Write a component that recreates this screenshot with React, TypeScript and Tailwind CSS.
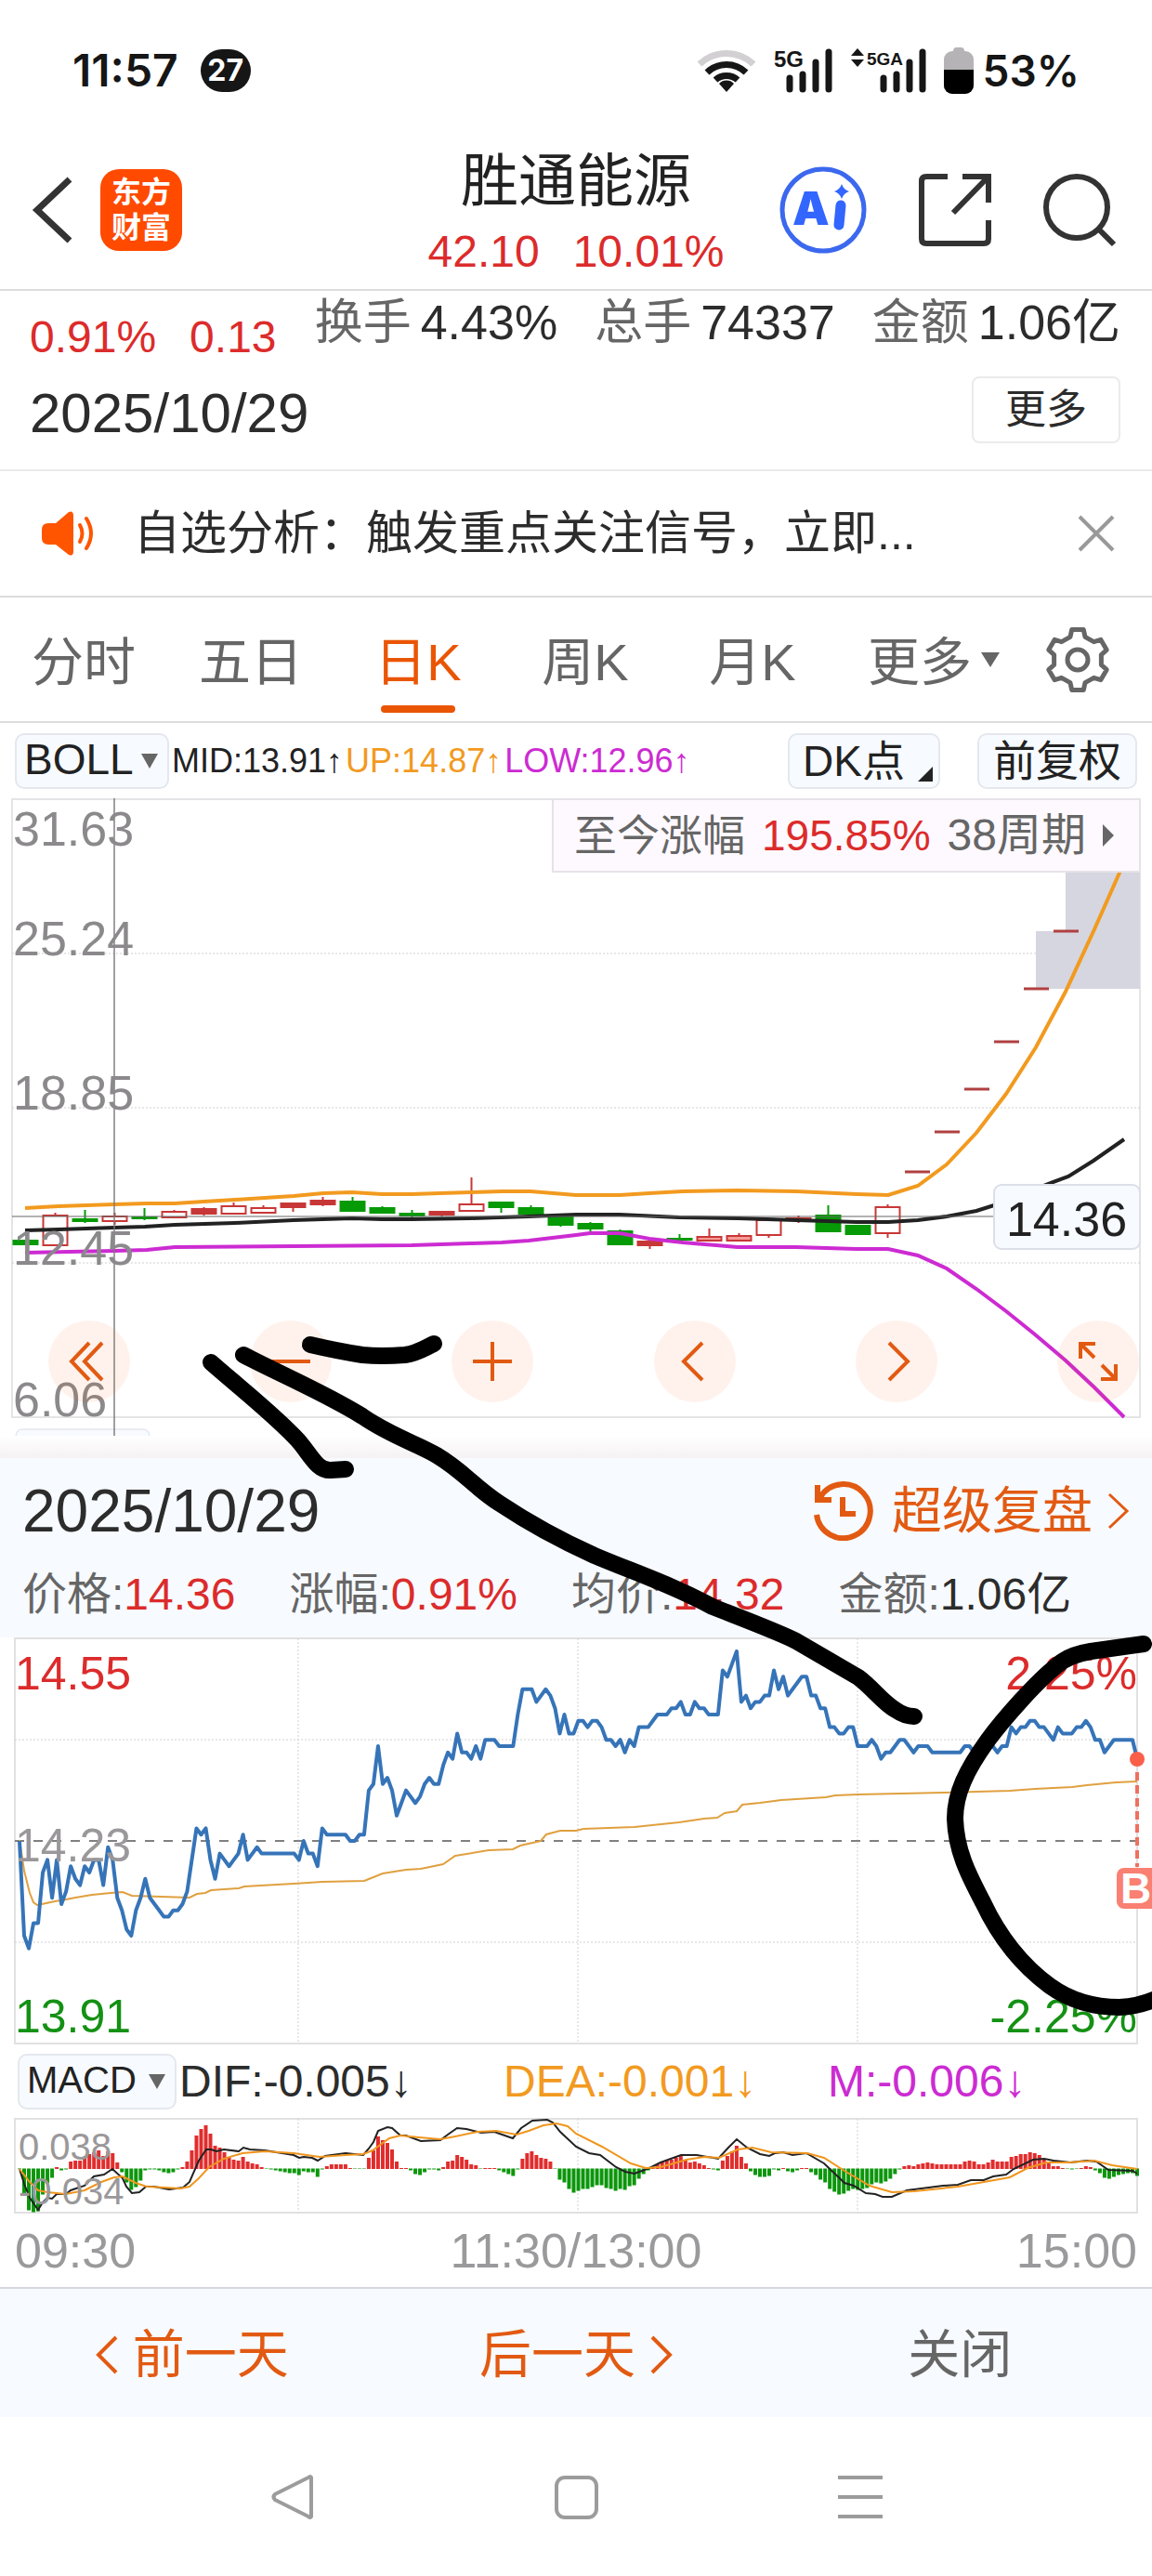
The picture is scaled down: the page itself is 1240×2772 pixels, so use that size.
import type { ReactNode } from "react";
import clsx from "clsx";

type Point = [number, number];

const TABS = ["分时", "五日", "日K", "周K", "月K"];

const STATS = [
  { label: "价格", value: "14.36", up: true },
  { label: "涨幅", value: "0.91%", up: true },
  { label: "均价", value: "14.32", up: true },
  { label: "金额", value: "1.06亿", up: false },
];

// kind, high, body top, body bottom, low
type Candle = ["up" | "solid" | "down", number, number, number, number];

const CANDLES: Candle[] = [
  ["down", 1335, 1335, 1339, 1339],
  ["up", 1305, 1308, 1340, 1340],
  ["down", 1302, 1312, 1314, 1316],
  ["up", 1305, 1309, 1314, 1318],
  ["down", 1300, 1310, 1311, 1313],
  ["up", 1302, 1304, 1310, 1310],
  ["solid", 1299, 1301, 1306, 1308],
  ["up", 1294, 1298, 1306, 1306],
  ["up", 1297, 1300, 1305, 1305],
  ["solid", 1294, 1295, 1299, 1304],
  ["solid", 1288, 1292, 1296, 1298],
  ["down", 1288, 1293, 1303, 1304],
  ["down", 1298, 1300, 1305, 1306],
  ["down", 1302, 1306, 1308, 1311],
  ["solid", 1303, 1304, 1307, 1309],
  ["up", 1267, 1296, 1303, 1303],
  ["down", 1294, 1294, 1299, 1305],
  ["down", 1297, 1300, 1306, 1307],
  ["down", 1309, 1309, 1318, 1320],
  ["down", 1315, 1317, 1322, 1325],
  ["down", 1323, 1325, 1339, 1339],
  ["solid", 1336, 1336, 1340, 1344],
  ["down", 1328, 1333, 1334, 1334],
  ["up", 1322, 1331, 1335, 1335],
  ["up", 1327, 1330, 1335, 1335],
  ["up", 1313, 1313, 1329, 1332],
  ["solid", 1308, 1311, 1313, 1316],
  ["down", 1297, 1308, 1325, 1325],
  ["down", 1319, 1319, 1328, 1329],
  ["up", 1296, 1299, 1327, 1332],
];

// limit-up days: open = high = low = close
const LIMIT_DAYS: Point[] = [
  [974, 1261], [1006, 1218], [1038, 1172], [1070, 1121], [1102, 1064], [1134, 1002],
];

const BOLL_UP: Point[] = [
  [27, 1300], [63, 1298], [123, 1296], [158, 1295], [188, 1295], [219, 1293], [253, 1291], [285, 1289],
  [316, 1287], [348, 1284], [379, 1283], [411, 1285], [443, 1285], [474, 1284], [507, 1283], [540, 1282],
  [571, 1282], [620, 1286], [635, 1286], [667, 1286], [699, 1284], [735, 1282], [794, 1281], [857, 1282],
  [922, 1285], [956, 1286], [988, 1276], [1019, 1253], [1051, 1219], [1083, 1177], [1115, 1127],
  [1147, 1067], [1178, 1000], [1206, 937],
];

const BOLL_MID: Point[] = [
  [27, 1324], [63, 1323], [123, 1321], [156, 1320], [188, 1318], [253, 1316], [316, 1313], [379, 1311],
  [411, 1312], [443, 1312], [506, 1311], [569, 1309], [620, 1307], [667, 1307], [731, 1310], [794, 1311],
  [857, 1313], [922, 1315], [956, 1315], [988, 1313], [1019, 1309], [1051, 1303], [1070, 1297],
  [1128, 1274], [1150, 1266], [1177, 1249], [1210, 1226],
];

const BOLL_LOW: Point[] = [
  [27, 1348], [123, 1346], [158, 1345], [188, 1342], [316, 1341], [443, 1340], [506, 1338], [540, 1337],
  [569, 1335], [620, 1329], [635, 1327], [667, 1327], [699, 1333], [735, 1337], [794, 1342], [857, 1342],
  [922, 1344], [956, 1344], [988, 1351], [1019, 1365], [1051, 1387], [1083, 1411], [1114, 1436],
  [1147, 1464], [1178, 1493], [1210, 1525],
];

// one value a minute, in cents above the previous close of 14.23
const PRICES = [
  0, -15, -17, -13, -13, -5, -3, -9, -3, -10, -8, -4, -6, -7, -4, -5, -3, -3, -7, -1,
  -3, -9, -11, -14, -15, -11, -9, -6, -9, -10, -11, -12, -12, -11, -11, -10, -8, -3, 2, 1,
  2, -3, -6, -2, -3, -4, -3, -2, 1, -3, -2, -1, -2, -2, -2, -2, -2, -2, -2, -2,
  -3, 0, -2, -2, -4, 2, 1, 1, 1, 1, 1, 0, 0, 1, 1, 8, 9, 15, 9, 10,
  8, 4, 6, 8, 7, 6, 7, 9, 10, 9, 9, 12, 14, 13, 17, 14, 14, 13, 15, 13,
  16, 16, 16, 15, 15, 15, 15, 20, 24, 24, 24, 22, 23, 24, 23, 21, 17, 20, 17, 17,
  19, 19, 18, 19, 19, 18, 16, 16, 15, 16, 14, 16, 15, 18, 18, 18, 19, 20, 20, 20,
  21, 21, 22, 20, 20, 22, 21, 21, 20, 20, 20, 27, 26, 28, 30, 22, 23, 21, 22, 22,
  23, 23, 27, 24, 26, 23, 24, 25, 26, 26, 23, 23, 21, 21, 18, 18, 17, 17, 18, 18,
  15, 15, 15, 16, 15, 13, 14, 14, 15, 16, 16, 15, 14, 15, 15, 15, 14, 14, 14, 14,
  14, 14, 14, 15, 15, 14, 14, 15, 15, 15, 14, 15, 15, 18, 17, 18, 18, 19, 19, 18,
  18, 17, 16, 18, 17, 17, 17, 18, 18, 19, 18, 16, 16, 14, 15, 16, 16, 16, 16, 16,
  13,
];

const AVERAGE: Point[] = [
  [21, 1980], [26, 2013], [32, 2037], [36, 2047], [40, 2050], [45, 2049], [59, 2046], [71, 2044],
  [81, 2042], [99, 2039], [119, 2037], [132, 2036], [142, 2040], [174, 2041], [204, 2042], [212, 2038],
  [221, 2037], [227, 2034], [257, 2032], [263, 2030], [316, 2027], [347, 2025], [392, 2024], [397, 2022],
  [412, 2016], [437, 2012], [453, 2011], [477, 2006], [490, 1997], [526, 1991], [552, 1990], [560, 1986],
  [582, 1981], [588, 1974], [603, 1970], [620, 1970], [628, 1968], [683, 1966], [731, 1961], [758, 1957],
  [772, 1956], [780, 1951], [793, 1949], [799, 1942], [818, 1940], [841, 1937], [889, 1934], [899, 1932],
  [924, 1931], [1015, 1929], [1087, 1927], [1114, 1925], [1154, 1923], [1170, 1921], [1201, 1918],
  [1224, 1917],
];

const MACD_BARS = [
  0, -28, -45, -47, -46, -28, -16, -10, 2, -2, -1, 8, 9, 9, 13, 16, 18, 20, 14, 19,
  17, 7, -4, -15, -23, -20, -13, -2, -1, -1, -2, -4, -5, -4, -1, 2, 8, 20, 36, 43,
  47, 38, 25, 23, 18, 12, 10, 9, 13, 8, 6, 5, 2, 0, -1, -2, -3, -4, -5, -5,
  -7, -3, -4, -4, -9, -1, 3, 5, 5, 5, 5, 1, 0, 0, 0, 12, 20, 35, 31, 28,
  21, 8, 1, 1, -2, -6, -7, -4, -1, -1, -2, 2, 8, 9, 15, 13, 10, 5, 4, 0,
  1, 1, 1, -2, -4, -6, -8, -1, 11, 17, 19, 15, 12, 11, 8, 0, -12, -15, -22, -26,
  -24, -22, -22, -20, -18, -18, -21, -22, -24, -22, -23, -19, -18, -11, -6, -2, 2, 5, 8, 9,
  10, 12, 14, 10, 7, 8, 6, 4, 1, -1, -2, 9, 14, 19, 25, 13, 6, -3, -7, -9,
  -9, -8, -1, -2, 1, -3, -4, -2, 1, 1, -4, -7, -12, -15, -22, -25, -28, -27, -24, -22,
  -23, -22, -21, -17, -15, -16, -14, -11, -6, -1, 3, 4, 3, 5, 6, 7, 6, 5, 5, 5,
  5, 5, 5, 8, 9, 8, 5, 5, 7, 10, 8, 8, 8, 13, 14, 16, 16, 18, 17, 15,
  11, 8, 3, 3, 1, 0, -1, 0, 1, 3, 2, -2, -5, -10, -11, -9, -7, -6, -5, -5,
  -8,
];

const DIF: Point[] = [
  [21, 2334], [26, 2350], [32, 2365], [41, 2378], [46, 2370], [51, 2365], [56, 2366], [61, 2361],
  [71, 2361], [76, 2357], [91, 2352], [101, 2342], [112, 2340], [121, 2334], [132, 2344], [136, 2353],
  [142, 2360], [150, 2359], [157, 2353], [166, 2353], [182, 2356], [197, 2354], [204, 2348], [214, 2325],
  [222, 2313], [227, 2313], [233, 2315], [241, 2313], [257, 2315], [262, 2311], [269, 2313], [285, 2314],
  [316, 2319], [322, 2322], [327, 2321], [336, 2322], [342, 2325], [350, 2320], [372, 2317], [391, 2319],
  [397, 2312], [402, 2305], [407, 2293], [417, 2289], [422, 2290], [431, 2298], [437, 2298], [453, 2304],
  [474, 2303], [482, 2297], [492, 2290], [502, 2291], [518, 2295], [532, 2294], [552, 2301], [561, 2290],
  [573, 2282], [589, 2281], [595, 2284], [603, 2294], [620, 2310], [634, 2317], [646, 2319], [663, 2332],
  [673, 2337], [683, 2339], [699, 2333], [711, 2327], [733, 2319], [750, 2319], [773, 2323], [784, 2311],
  [793, 2302], [804, 2311], [818, 2318], [828, 2320], [834, 2317], [843, 2316], [853, 2319], [868, 2317],
  [887, 2328], [909, 2349], [919, 2352], [932, 2360], [942, 2361], [950, 2364], [960, 2364], [976, 2357],
  [1015, 2352], [1031, 2351], [1045, 2346], [1059, 2346], [1069, 2342], [1083, 2340], [1091, 2334],
  [1112, 2324], [1124, 2323], [1134, 2325], [1152, 2327], [1170, 2325], [1180, 2326], [1193, 2335],
  [1219, 2336], [1224, 2339],
];

const DEA: Point[] = [
  [21, 2334], [32, 2348], [41, 2357], [51, 2359], [71, 2361], [91, 2357], [109, 2348], [123, 2343],
  [132, 2342], [146, 2349], [158, 2353], [178, 2354], [194, 2355], [204, 2353], [214, 2344], [225, 2332],
  [241, 2323], [261, 2317], [285, 2315], [316, 2317], [344, 2321], [372, 2319], [391, 2318], [401, 2314],
  [419, 2301], [431, 2298], [451, 2300], [474, 2302], [490, 2299], [514, 2294], [534, 2293], [556, 2297],
  [569, 2293], [585, 2287], [599, 2285], [611, 2288], [620, 2296], [648, 2310], [679, 2328], [695, 2333],
  [711, 2332], [739, 2324], [758, 2321], [774, 2322], [794, 2313], [810, 2311], [830, 2316], [869, 2317],
  [887, 2322], [909, 2336], [936, 2352], [960, 2359], [984, 2358], [1031, 2353], [1087, 2343],
  [1106, 2333], [1126, 2327], [1150, 2327], [1178, 2325], [1197, 2330], [1224, 2334],
];

const line = (points: Point[]) => points.map((p) => p.join(",")).join(" ");
const minuteX = (i: number) => 21 + i * 5.0125;

// six-tooth gear outline around 0,0
const GEAR = Array.from({ length: 6 }, (_, k) =>
  [[-18, 26], [-11, 33], [11, 33], [18, 26]].map(([offset, r]) => {
    const a = ((k * 60 - 90 + offset) * Math.PI) / 180;
    return `${(r * Math.cos(a)).toFixed(1)},${(r * Math.sin(a)).toFixed(1)}`;
  }).join(" ")
).join(" ");

function SignalBars() {
  return (
    <>
      <path d="M15 44V32" />
      <path d="M29 44V28" />
      <path d="M43 44V15" />
      <path d="M57 44V4" />
    </>
  );
}

function StatusBar() {
  return (
    <div className="flex h-[148px] items-center justify-between pl-[78px] pr-[78px] pt-1 font-['Inter',sans-serif] text-[#161616]">
      <div className="flex items-center gap-6">
        <span className="text-[48px] font-semibold leading-none">11:57</span>
        <span className="flex h-[46px] w-[54px] items-center justify-center rounded-full bg-[#161616] text-[32px] font-bold leading-none text-white">27</span>
      </div>
      <div className="flex items-center">
        <svg className="h-12 w-16" viewBox="0 0 64 48" fill="none" strokeWidth="7" aria-label="Wi-Fi">
          <path d="M3 17a42 42 0 0 1 58 0" stroke="#d2d0d2" />
          <path d="M11 26a30 30 0 0 1 42 0" stroke="#161616" />
          <path d="M20 34a18 18 0 0 1 24 0" stroke="#161616" />
          <path d="M32 47l-8-9a11 11 0 0 1 16 0z" fill="#161616" />
        </svg>
        <svg className="ml-[18px] h-12 w-[66px] overflow-visible font-['Liberation_Sans',sans-serif]" viewBox="0 0 66 48" stroke="#161616" strokeWidth="7" strokeLinecap="round" aria-label="5G">
          <g transform="translate(3 0)"><SignalBars /></g>
          <text x="1" y="20" fontSize="24" fontWeight="700" stroke="none" fill="#161616">5G</text>
        </svg>
        <svg className="ml-[18px] h-12 w-[84px] overflow-visible font-['Liberation_Sans',sans-serif]" viewBox="0 0 84 48" stroke="#161616" strokeWidth="7" strokeLinecap="round" aria-label="5GA">
          <g transform="translate(20 0)"><SignalBars /></g>
          <path d="M0 8l7-8 7 8zM0 12l7 8 7-8z" stroke="none" fill="#161616" />
          <text x="17" y="18" fontSize="19" fontWeight="700" stroke="none" fill="#161616">5GA</text>
        </svg>
        <svg className="ml-4 h-[50px] w-8" viewBox="0 0 32 50" aria-label="Battery">
          <rect x="10" y="0" width="12" height="10" rx="4" fill="#b5b3b5" />
          <rect x="0" y="4" width="32" height="46" rx="9" fill="#b5b3b5" />
          <path d="M0 24h32v17a9 9 0 0 1-9 9H9a9 9 0 0 1-9-9z" fill="#000" />
        </svg>
        <span className="ml-[10px] text-[46px] font-semibold leading-none">53%</span>
      </div>
    </div>
  );
}

function Header() {
  return (
    <header className="relative flex h-[165px] items-center justify-between border-b-2 border-[#dcdcde] pb-2 pl-8 pr-[38px]">
      <div className="flex items-center gap-7">
        <button type="button" aria-label="返回">
          <svg className="h-[76px] w-12" viewBox="0 0 48 76" fill="none" stroke="#333" strokeWidth="7">
            <path d="M43 5L8 38l35 33" />
          </svg>
        </button>
        <a href="#home" className="flex size-[88px] flex-col items-center justify-center rounded-[20px] bg-[#ff4a00] text-[32px] font-bold leading-[38px] text-white">
          <span>东方</span>
          <span>财富</span>
        </a>
      </div>
      <div className="absolute inset-x-0 top-2 mx-auto flex w-fit flex-col items-center">
        <h1 className="text-[62px] leading-[80px] text-[#222]">胜通能源</h1>
        <p className="flex gap-9 text-[48px] leading-[70px] text-[#dc2b2b]">
          <span>42.10</span>
          <span>10.01%</span>
        </p>
      </div>
      <div className="flex items-center gap-[54px]">
        <button type="button" aria-label="Ai">
          <svg className="size-24" viewBox="0 0 96 96">
            <circle cx="48" cy="48" r="44" fill="none" stroke="#3b68ee" strokeWidth="5" />
            <text x="15" y="64" fontSize="50" fontWeight="900" fill="#3366ff" className="font-['Inter',sans-serif]">A</text>
            <path d="M67 43l-2 21" stroke="#3366ff" strokeWidth="11" strokeLinecap="round" />
            <path d="M68 20q2 6 8 8-6 2-8 8-2-6-8-8 6-2 8-8z" fill="#3366ff" />
          </svg>
        </button>
        <button type="button" aria-label="分享">
          <svg className="size-20" viewBox="0 0 80 80" fill="none" stroke="#333" strokeWidth="6">
            <path d="M32 4H9q-5 0-5 5v62q0 5 5 5h62q5 0 5-5V51" />
            <path d="M48 4h28v28" />
            <path d="M75 5L38 43" />
          </svg>
        </button>
        <button type="button" aria-label="搜索">
          <svg className="size-20" viewBox="0 0 80 80" fill="none" stroke="#333" strokeWidth="6">
            <circle cx="37" cy="37" r="33" />
            <path d="M60 60l17 17" />
          </svg>
        </button>
      </div>
    </header>
  );
}

function Quote() {
  return (
    <section className="flex h-[194px] justify-between border-b-2 border-[#ebebeb] pl-8 pr-[34px] text-[#2c2c2c]">
      <div className="pt-[9px] leading-[82px]">
        <p className="flex gap-9 text-[48px] text-[#dc2b2b]">
          <span>0.91%</span>
          <span>0.13</span>
        </p>
        <p className="text-[60px]">2025/10/29</p>
      </div>
      <div className="flex flex-col items-end gap-6">
        <dl className="flex gap-10 text-[52px] leading-[68px]">
          {[["换手", "4.43%"], ["总手", "74337"], ["金额", "1.06亿"]].map(([k, v]) => (
            <div key={k} className="flex gap-[10px]">
              <dt className="text-[#666]">{k}</dt>
              <dd>{v}</dd>
            </div>
          ))}
        </dl>
        <button type="button" className="h-[72px] w-40 rounded-lg border-2 border-[#ebebeb] text-[44px] leading-none">更多</button>
      </div>
    </section>
  );
}

function Notice() {
  return (
    <section className="flex h-[136px] items-center border-b-2 border-[#dcdcde] pl-11 pr-[38px]">
      <svg className="h-12 w-[58px]" viewBox="0 0 58 48" fill="none" stroke="#ff5500" strokeWidth="4" strokeLinecap="round">
        <path d="M8 13h8L30 1q5-2 5 4v38q0 6-5 4L16 36H8q-7 0-7-7v-9q0-7 7-7z" fill="#ff5500" stroke="none" />
        <path d="M42 15q5 9 0 18" />
        <path d="M49 8q10 16 0 32" />
      </svg>
      <p className="ml-[42px] flex-1 truncate text-[50px] text-[#2c2c2c]">自选分析：触发重点关注信号，立即...</p>
      <button type="button" aria-label="关闭提示">
        <svg className="size-11" viewBox="0 0 44 44" stroke="#999" strokeWidth="4">
          <path d="M4 4l36 36M40 4L4 40" />
        </svg>
      </button>
    </section>
  );
}

function Tabs() {
  return (
    <nav className="grid h-[135px] grid-cols-[repeat(6,9fr)_8fr] border-b-2 border-[#dcdcde] text-[56px] text-[#666]">
      {TABS.map((tab) => (
        <button key={tab} type="button" className={clsx("relative pt-[6px]", tab === "日K" && "text-[#ea5504]")}>
          {tab}
          {tab === "日K" && <span className="absolute inset-x-0 bottom-[9px] mx-auto h-2 w-20 rounded-full bg-[#ea5504]" />}
        </button>
      ))}
      <button type="button" className="relative pt-[6px]">
        更多
        <svg className="absolute right-1 top-[59px] h-4 w-5" viewBox="0 0 20 16"><path d="M0 0h20L10 16z" fill="#666" /></svg>
      </button>
      <button type="button" aria-label="设置" className="flex items-center justify-center">
        <svg className="size-[74px]" viewBox="-37 -37 74 74" fill="none" stroke="#666" strokeWidth="5" strokeLinejoin="round">
          <polygon points={GEAR} />
          <circle r="11" />
        </svg>
      </button>
    </nav>
  );
}

function Picker({ name, options, className }: { name: string; options: string[]; className: string }) {
  return (
    <div className="relative">
      <select
        aria-label={name}
        className={clsx("block h-[60px] appearance-none rounded-[10px] border-2 border-[#e4e8ee] bg-[#f7faff] pb-1 pl-2 leading-none text-[#222]", className)}
      >
        {options.map((o) => <option key={o}>{o}</option>)}
      </select>
      <svg className="pointer-events-none absolute right-3 top-[22px] h-4 w-[18px]" viewBox="0 0 18 16"><path d="M0 0h18L9 16z" fill="#666" /></svg>
    </div>
  );
}

function IndicatorRow() {
  return (
    <div className="flex h-[81px] items-center pl-4 pr-4">
      <Picker name="主图指标" options={["BOLL", "MA"]} className="w-[166px] text-[46px]" />
      <p className="ml-[3px] flex flex-1 gap-[3px] text-[36px]">
        <span className="text-[#222]">MID:13.91↑</span>
        <span className="text-[#f29a1f]">UP:14.87↑</span>
        <span className="text-[#cc2bd2]">LOW:12.96↑</span>
      </p>
      <div className="flex gap-10 text-[46px] leading-none text-[#222]">
        <button type="button" className="relative h-[60px] w-[164px] rounded-[10px] border-2 border-[#e4e8ee] bg-[#f7faff] pl-[14px] text-left">
          DK点
          <svg className="absolute bottom-[6px] right-[6px] size-4" viewBox="0 0 16 16"><path d="M16 0v16H0z" fill="#222" /></svg>
        </button>
        <button type="button" className="h-[60px] w-[172px] rounded-[10px] border-2 border-[#e4e8ee] bg-[#f7faff]">前复权</button>
      </div>
    </div>
  );
}

function RoundButton({ label, children }: { label: string; children: ReactNode }) {
  return (
    <button type="button" aria-label={label} className="size-[88px] rounded-full bg-[#ff5500]/[0.075]">
      <svg viewBox="-44 -44 88 88" fill="none" stroke="#e25a12" strokeWidth="4">{children}</svg>
    </button>
  );
}

function DailyChart() {
  return (
    <section className="relative">
      <svg className="block w-full" viewBox="0 859 1240 686">
        <g stroke="#e4e4e6" strokeWidth="2" fill="none">
          <rect x="13" y="860" width="1214" height="665" />
          <path d="M13 1026h1214M13 1192h1214M13 1359h1214" stroke="#d0d0d0" strokeWidth="1" strokeDasharray="2 2" />
        </g>
        <path d="M1147 937h80v127h-112v-62h32z" fill="#d5d6df" />
        <path d="M17 1548v-2q0-8 8-8h128q8 0 8 8v2" fill="#f7faff" stroke="#d9dde6" />

        {CANDLES.map(([kind, high, top, bottom, low], i) => {
          const x = 27.5 + i * 32;
          const color = kind === "down" ? "#069a06" : "#c83737";
          return (
            <g key={i} stroke={color} strokeWidth="2">
              {high < top && <path d={`M${x} ${high}V${top}`} />}
              {low > bottom && <path d={`M${x} ${bottom}V${low}`} />}
              <rect
                x={x - 13}
                y={top}
                width="26"
                height={bottom - top}
                fill={kind === "up" ? (i === 23 || i === 24 ? "#f79a94" : "#fff") : color}
              />
            </g>
          );
        })}
        {LIMIT_DAYS.map(([x, y]) => <path key={x} d={`M${x} ${y}h27`} stroke="#b04040" strokeWidth="3" />)}

        <g fill="none" strokeWidth="4">
          <polyline points={line(BOLL_LOW)} stroke="#cc2bd2" />
          <polyline points={line(BOLL_UP)} stroke="#f29a1f" />
          <polyline points={line(BOLL_MID)} stroke="#222" />
        </g>
        <path d="M13 1309h1060" stroke="#666" strokeWidth="1" />
        <path d="M123 859v686" stroke="#777" strokeOpacity="0.7" strokeWidth="2" />

        <g fontSize="52" fill="#8b898b">
          <text x="14" y="910">31.63</text>
          <text x="14" y="1028">25.24</text>
          <text x="14" y="1194">18.85</text>
          <text x="14" y="1361">12.45</text>
          <text x="14" y="1524">6.06</text>
        </g>
        <rect x="1070" y="1275" width="157" height="69" rx="8" fill="#f7faff" stroke="#dcdfe8" strokeWidth="2" />
        <text x="1148" y="1330" fontSize="52" textAnchor="middle" fill="#222">14.36</text>
      </svg>

      <button type="button" className="absolute right-3 top-0 flex h-20 w-[634px] items-center gap-[18px] border-2 border-[#e6e2e8] bg-[#fdf9ff] pl-[22px] text-[46px] text-[#666]">
        <span>至今涨幅</span>
        <span className="text-[#dc2b2b]">195.85%</span>
        <span className="text-[48px]">38周期</span>
        <svg className="h-6 w-3" viewBox="0 0 12 24"><path d="M0 0l12 12L0 24z" fill="#666" /></svg>
      </button>

      <div className="absolute bottom-9 left-[52px] right-[14px] flex justify-between">
        <RoundButton label="最早"><path d="M0-20l-19 20 19 20M14-20L-5 0l19 20" /></RoundButton>
        <RoundButton label="缩小"><path d="M-21 0h42" /></RoundButton>
        <RoundButton label="放大"><path d="M-21 0h42M0-21v42" /></RoundButton>
        <RoundButton label="左移"><path d="M8-20l-20 20L8 20" /></RoundButton>
        <RoundButton label="右移"><path d="M-8-20l20 20L-8 20" /></RoundButton>
        <RoundButton label="全屏"><path d="M-19-3v-16H-3M-19-19L-4-4M19 3v16H3M19 19L4 4" /></RoundButton>
      </div>
    </section>
  );
}

function ReplayHeader() {
  return (
    <section>
      <div className="h-6 bg-gradient-to-b from-white to-[#f6f2f4]" />
      <div className="h-[193px] bg-[#f7faff] pl-6 pr-6 pt-[17px]">
        <div className="flex h-20 items-center justify-between">
          <h2 className="text-[64px] leading-none text-[#2c2c2c]">2025/10/29</h2>
          <a href="#replay" className="flex items-center text-[54px] leading-none text-[#e25a12]">
            <svg className="mr-5 size-16" viewBox="0 0 64 64" fill="none" stroke="#e25a12" strokeWidth="6">
              <path d="M7 17A29 29 0 1 1 3 36" />
              <path d="M4 4v16h15" />
              <path d="M31 17v18h14" />
            </svg>
            超级复盘
            <svg className="ml-4 h-10 w-6" viewBox="0 0 24 40" fill="none" stroke="#e25a12" strokeWidth="3">
              <path d="M2 2l19 18L2 38" />
            </svg>
          </a>
        </div>
        <dl className="mt-[10px] flex gap-[58px] text-[48px] leading-[80px]">
          {STATS.map((s) => (
            <div key={s.label} className="flex">
              <dt className="text-[#666]">{s.label}:</dt>
              <dd className={s.up ? "text-[#dc2b2b]" : "text-[#2c2c2c]"}>{s.value}</dd>
            </div>
          ))}
        </dl>
      </div>
    </section>
  );
}

function MinuteChart() {
  const price = PRICES.map((cents, i): Point => [minuteX(i), 1981 - cents * 6.8]);
  return (
    <svg className="block w-full" viewBox="0 1762 1240 439">
      <g stroke="#e2e0e2" strokeWidth="2" fill="none">
        <rect x="16" y="1763" width="1208" height="436" />
        <path d="M16 1872h1208M16 2090h1208M321 1763v436M622 1763v436M923 1763v436" strokeWidth="1" strokeDasharray="2 2" stroke="#d0d0d0" />
        <path d="M16 1981h1208" stroke="#808080" strokeDasharray="10 10" />
      </g>
      <g fontSize="50">
        <text x="16" y="1818" fill="#dc2b2b">14.55</text>
        <text x="16" y="2187" fill="#149114">13.91</text>
        <text x="1224" y="1818" fill="#dc2b2b" textAnchor="end">2.25%</text>
        <text x="1224" y="2187" fill="#149114" textAnchor="end">-2.25%</text>
      </g>
      <polyline points={line(AVERAGE)} fill="none" stroke="#e0a040" strokeWidth="2" />
      <polyline points={line(price)} fill="none" stroke="#3674b8" strokeWidth="4" strokeLinejoin="round" />
      <text x="16" y="2003" fontSize="50" fill="#9a989a">14.23</text>
      <path d="M1224 1907v102" stroke="#f0705f" strokeWidth="4" strokeDasharray="9 5" />
      <circle cx="1224" cy="1893" r="8" fill="#fa5f4a" />
      <rect x="1202" y="2010" width="46" height="44" rx="8" fill="#f98072" />
      <text x="1206" y="2048" fontSize="46" fontWeight="700" fill="#fff">B</text>
    </svg>
  );
}

function MacdPanel() {
  return (
    <section>
      <div className="flex h-[78px] items-center pl-[19px]">
        <Picker name="副图指标" options={["MACD", "KDJ"]} className="w-[171px] text-[40px]" />
        <p className="ml-[3px] grid flex-1 grid-cols-3 text-[48px] leading-none">
          <span className="text-[#2c2c2c]">DIF:-0.005↓</span>
          <span className="text-[#f29a1f]">DEA:-0.001↓</span>
          <span className="text-[#cc2bd2]">M:-0.006↓</span>
        </p>
      </div>
      <svg className="block w-full" viewBox="0 2279 1240 104">
        <g stroke="#e2e0e2" strokeWidth="2" fill="none">
          <rect x="16" y="2280" width="1208" height="101" />
          <path d="M321 2280v101M622 2280v101M923 2280v101" strokeWidth="1" strokeDasharray="2 2" stroke="#d0d0d0" />
        </g>
        {MACD_BARS.map((v, i) => (
          <rect
            key={i}
            x={minuteX(i) - 2}
            y={v > 0 ? 2334 - v : 2333.5}
            width="4"
            height={Math.max(Math.abs(v), 0.5)}
            fill={v > 0 ? "#e12d2d" : "#0c960c"}
          />
        ))}
        <polyline points={line(DIF)} fill="none" stroke="#222" strokeWidth="2" />
        <polyline points={line(DEA)} fill="none" stroke="#f0961e" strokeWidth="2" />
        <g fontSize="40" fill="#9a989a">
          <text x="20" y="2324">0.038</text>
          <text x="20" y="2372">-0.034</text>
        </g>
      </svg>
      <div className="flex h-[78px] items-center justify-between px-4 text-[52px] leading-none text-[#9a999b]">
        <span>09:30</span>
        <span>11:30/13:00</span>
        <span>15:00</span>
      </div>
    </section>
  );
}

function DayPager() {
  return (
    <div className="grid h-[140px] grid-cols-3 border-t-2 border-[#d6d8de] bg-[#f7faff] pt-1 text-[56px] leading-none text-[#e25a12]">
      <button type="button" className="flex items-center justify-center gap-4">
        <svg className="h-[42px] w-6" viewBox="0 0 24 42" fill="none" stroke="#e25a12" strokeWidth="4"><path d="M22 2L3 21l19 19" /></svg>
        前一天
      </button>
      <button type="button" className="flex items-center justify-center gap-4">
        后一天
        <svg className="h-[42px] w-6" viewBox="0 0 24 42" fill="none" stroke="#e25a12" strokeWidth="4"><path d="M2 2l19 19L2 40" /></svg>
      </button>
      <button type="button" className="text-[#666]">关闭</button>
    </div>
  );
}

function SystemNav() {
  return (
    <div className="flex h-[171px] items-center justify-center gap-[258px]">
      <button type="button" aria-label="Back">
        <svg className="size-12" viewBox="0 0 48 48" fill="none" stroke="#9c9c9c" strokeWidth="4" strokeLinejoin="round"><path d="M45 3v42q-1 2-3 0L6 27q-3-3 0-6L42 3q2-2 3 0z" /></svg>
      </button>
      <button type="button" aria-label="Home">
        <svg className="size-12" viewBox="0 0 48 48" fill="none" stroke="#9c9c9c" strokeWidth="4"><rect x="3" y="3" width="43" height="43" rx="9" /></svg>
      </button>
      <button type="button" aria-label="Recents">
        <svg className="size-12" viewBox="0 0 48 48" stroke="#9c9c9c" strokeWidth="4"><path d="M0 3h48M0 24h48M0 45h48" /></svg>
      </button>
    </div>
  );
}

// hand-drawn marker over the page
function Markup() {
  return (
    <svg className="pointer-events-none absolute inset-x-0 top-0 w-full" viewBox="0 0 1240 2772" fill="none" stroke="#000" strokeWidth="18" strokeLinecap="round" strokeLinejoin="round">
      <path d="M262 1458C300 1478 350 1499 390 1524C420 1545 450 1554 470 1566C500 1584 510 1600 538 1618C565 1636 600 1656 640 1674C685 1693 720 1704 767 1729C800 1742 840 1757 857 1766L924 1805C940 1817 950 1832 964 1840Q974 1847 984 1847" />
      <path d="M227 1466C260 1495 290 1518 318 1547C333 1562 340 1583 356 1582L372 1581" />
      <path d="M334 1447Q364 1454 390 1458Q410 1460 436 1458C450 1456 458 1450 467 1446" />
      <path d="M1231 1769L1174 1777Q1150 1781 1138 1792C1115 1810 1080 1850 1063 1873C1040 1905 1028 1930 1028 1957C1029 1993 1044 2020 1058 2047C1075 2083 1100 2115 1130 2137C1155 2155 1180 2160 1205 2160Q1225 2159 1244 2151" />
    </svg>
  );
}

export default function App() {
  return (
    <main className="relative w-full overflow-hidden bg-white font-['Liberation_Sans','Noto_Sans_CJK_SC',sans-serif]">
      <StatusBar />
      <Header />
      <Quote />
      <Notice />
      <Tabs />
      <IndicatorRow />
      <DailyChart />
      <ReplayHeader />
      <MinuteChart />
      <MacdPanel />
      <DayPager />
      <SystemNav />
      <Markup />
    </main>
  );
}
